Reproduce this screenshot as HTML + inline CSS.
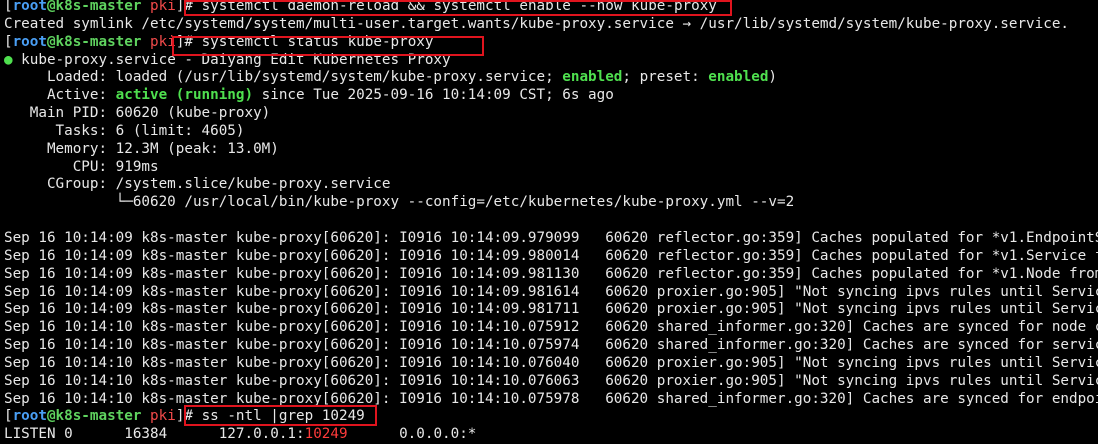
<!DOCTYPE html>
<html><head><meta charset="utf-8"><style>
html,body{margin:0;padding:0;background:#000;width:1098px;height:441px;overflow:hidden}
pre{margin:0;position:absolute;left:4px;top:-2px;font-family:"DejaVu Sans Mono","Liberation Mono",monospace;font-size:14.28px;line-height:17.84px;color:#e8e8e8;white-space:pre}
.b{color:#4a9ff5;font-weight:bold}.g{color:#5fd35f;font-weight:bold}.r{color:#f04a4a}.G{color:#4fe04f;font-weight:bold}.R{color:#ff3b3b}
.box{position:absolute;border:2px solid #e0141e;box-sizing:border-box}
</style></head><body>
<pre>[<span class="b">root</span><span class="g">@k8s-master</span> <span class="r">pki</span>]# systemctl daemon-reload &amp;&amp; systemctl enable --now kube-proxy
Created symlink /etc/systemd/system/multi-user.target.wants/kube-proxy.service → /usr/lib/systemd/system/kube-proxy.service.
[<span class="b">root</span><span class="g">@k8s-master</span> <span class="r">pki</span>]# systemctl status kube-proxy
<span class="G">●</span> kube-proxy.service - Daiyang Edit Kubernetes Proxy
     Loaded: loaded (/usr/lib/systemd/system/kube-proxy.service; <span class="G">enabled</span>; preset: <span class="G">enabled</span>)
     Active: <span class="G">active (running)</span> since Tue 2025-09-16 10:14:09 CST; 6s ago
   Main PID: 60620 (kube-proxy)
      Tasks: 6 (limit: 4605)
     Memory: 12.3M (peak: 13.0M)
        CPU: 919ms
     CGroup: /system.slice/kube-proxy.service
             └─60620 /usr/local/bin/kube-proxy --config=/etc/kubernetes/kube-proxy.yml --v=2

Sep 16 10:14:09 k8s-master kube-proxy[60620]: I0916 10:14:09.979099   60620 reflector.go:359] Caches populated for *v1.EndpointSlice
Sep 16 10:14:09 k8s-master kube-proxy[60620]: I0916 10:14:09.980014   60620 reflector.go:359] Caches populated for *v1.Service from
Sep 16 10:14:09 k8s-master kube-proxy[60620]: I0916 10:14:09.981130   60620 reflector.go:359] Caches populated for *v1.Node from
Sep 16 10:14:09 k8s-master kube-proxy[60620]: I0916 10:14:09.981614   60620 proxier.go:905] "Not syncing ipvs rules until Services
Sep 16 10:14:09 k8s-master kube-proxy[60620]: I0916 10:14:09.981711   60620 proxier.go:905] "Not syncing ipvs rules until Services
Sep 16 10:14:10 k8s-master kube-proxy[60620]: I0916 10:14:10.075912   60620 shared_informer.go:320] Caches are synced for node co
Sep 16 10:14:10 k8s-master kube-proxy[60620]: I0916 10:14:10.075974   60620 shared_informer.go:320] Caches are synced for service
Sep 16 10:14:10 k8s-master kube-proxy[60620]: I0916 10:14:10.076040   60620 proxier.go:905] "Not syncing ipvs rules until Services
Sep 16 10:14:10 k8s-master kube-proxy[60620]: I0916 10:14:10.076063   60620 proxier.go:905] "Not syncing ipvs rules until Services
Sep 16 10:14:10 k8s-master kube-proxy[60620]: I0916 10:14:10.075978   60620 shared_informer.go:320] Caches are synced for endpoin
[<span class="b">root</span><span class="g">@k8s-master</span> <span class="r">pki</span>]# ss -ntl |grep 10249
LISTEN 0      16384      127.0.0.1:<span class="R">10249</span>      0.0.0.0:*</pre>
<div class="box" style="left:184px;top:0;width:548px;height:16px"></div>
<div class="box" style="left:172px;top:36px;width:312px;height:20px"></div>
<div class="box" style="left:184px;top:405px;width:193px;height:21px"></div>
</body></html>
